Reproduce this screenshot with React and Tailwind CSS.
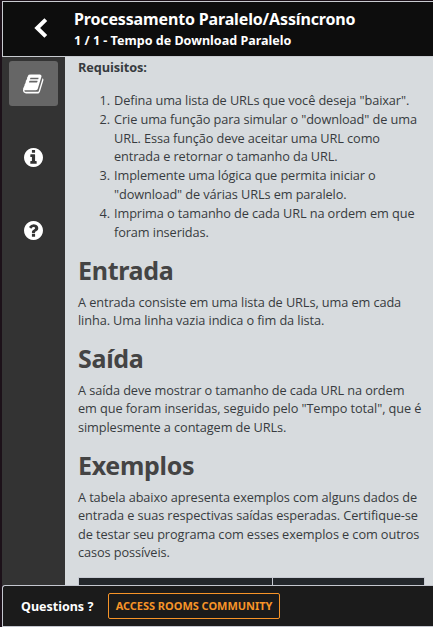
import React from "react";

const BOOK =
  "M1639 478q40 57 18 129l-275 906q-19 64-76.5 107.5t-122.5 43.5h-923q-77 0-148.5-53.5t-99.5-131.5q-24-67-2-127 0-4 3-27t4-37q1-8-3-21.5t-3-19.5q2-11 8-21t16.5-23.5 16.5-23.5q23-38 45-91.5t30-91.5q3-10 .5-30t-.5-28q3-11 17-28t17-23q21-36 42-92t25-90q1-9-2.5-32t.5-28q4-13 22-30.5t22-22.5q19-26 42.5-84.5t27.5-96.5q1-8-3-25.5t-2-26.5q2-8 9-18t18-23 17-21q8-12 16.5-30.5t15-35 16-36 19.5-32 26.5-23.5 36-11.5 47.5 5.5l-1 3q38-9 51-9h761q74 0 114 56t18 130l-274 906q-36 119-71.5 153.5t-128.5 34.5h-869q-27 0-38 15-11 16-1 43 24 70 144 70h923q29 0 56-15.5t35-41.5l300-987q7-22 5-57 38 15 59 43zm-1064 2q-4 13 2 22.5t20 9.5h608q13 0 25.5-9.5t16.5-22.5l21-64q4-13-2-22.5t-20-9.5h-608q-13 0-25.5 9.5t-16.5 22.5zm-83 256q-4 13 2 22.5t20 9.5h608q13 0 25.5-9.5t16.5-22.5l21-64q4-13-2-22.5t-20-9.5h-608q-13 0-25.5 9.5t-16.5 22.5z";

const INFO =
  "M1152 1376v-160q0-14-9-23t-23-9h-96v-512q0-14-9-23t-23-9h-320q-14 0-23 9t-9 23v160q0 14 9 23t23 9h96v320h-96q-14 0-23 9t-9 23v160q0 14 9 23t23 9h448q14 0 23-9t9-23zm-128-896v-160q0-14-9-23t-23-9h-192q-14 0-23 9t-9 23v160q0 14 9 23t23 9h192q14 0 23-9t9-23zm640 416q0 209-103 385.5t-279.5 279.5-385.5 103-385.5-103-279.5-279.5-103-385.5 103-385.5 279.5-279.5 385.5-103 385.5 103 279.5 279.5 103 385.5z";

const QUESTION =
  "M1024 1376v-192q0-14-9-23t-23-9h-192q-14 0-23 9t-9 23v192q0 14 9 23t23 9h192q14 0 23-9t9-23zm256-672q0-88-55.5-163t-138.5-116-170-41q-243 0-371 213-15 24 8 42l132 100q7 6 19 6 16 0 25-12 53-68 86-92 34-24 86-24 48 0 85.5 26t37.5 59q0 38-20 61t-68 45q-63 28-115.5 86.5t-52.5 125.5v36q0 14 9 23t23 9h192q14 0 23-9t9-23q0-19 21.5-49.5t54.5-49.5q32-18 49-28.5t46-35 44.5-48 28-60.5 12.5-81zm384 192q0 209-103 385.5t-279.5 279.5-385.5 103-385.5-103-279.5-279.5-103-385.5 103-385.5 279.5-279.5 385.5-103 385.5 103 279.5 279.5 103 385.5z";

function Lines({ lines }) {
  return lines.map((line) => (
    <span key={line} className="block whitespace-nowrap">
      {line}
    </span>
  ));
}

function Section({ title, lines }) {
  return (
    <section>
      <h1 className="mb-[8.7px] font-['Noto_Sans',sans-serif] text-[25px] leading-[28px] font-bold tracking-[-0.3px] text-[#444444]">
        {title}
      </h1>
      <p className="mb-[14.3px]">
        <Lines lines={lines} />
      </p>
    </section>
  );
}

const REQUIREMENTS = [
  ['Defina uma lista de URLs que você deseja "baixar".'],
  [
    'Crie uma função para simular o "download" de uma',
    "URL. Essa função deve aceitar uma URL como",
    "entrada e retornar o tamanho da URL.",
  ],
  ["Implemente uma lógica que permita iniciar o", '"download" de várias URLs em paralelo.'],
  ["Imprima o tamanho de cada URL na ordem em que", "foram inseridas."],
];

export default function App() {
  return (
    <div className="flex h-[627px] w-[433px] flex-col overflow-hidden bg-[#1c1119] pt-px pl-[2px] font-['Noto_Sans',sans-serif]">
      <header className="flex h-[56px] shrink-0 border-t border-b border-l border-[#c8cbd0] bg-[#0d0d0d] text-white">
        <div className="w-[71px] pt-[16px] pl-[31px]">
          <svg width="14" height="20" viewBox="0 0 14 20" fill="none" stroke="currentColor" strokeWidth="4">
            <path d="M11.8 1.6 3.2 10l8.6 8.4" />
          </svg>
        </div>
        <div className="pt-[6px] font-bold whitespace-nowrap">
          <div className="text-[16px] leading-[22px] tracking-[-0.15px]">Processamento Paralelo/Assíncrono</div>
          <div className="mt-[2px] text-[12.55px] leading-[18px]">1 / 1 - Tempo de Download Paralelo</div>
        </div>
      </header>

      <div className="flex h-[528px] shrink-0 overflow-hidden">
        <nav className="flex w-[63px] shrink-0 flex-col items-center bg-[#333333] pt-[4px] text-white">
          <button className="flex h-[45px] w-[49px] items-center justify-center rounded-[3px] bg-[#666666]">
            <svg width="22" height="22" viewBox="0 0 1792 1792" fill="currentColor">
              <path d={BOOK} />
            </svg>
          </button>
          <svg className="mt-[42px] size-[19px] shrink-0" viewBox="128 128 1536 1536" fill="currentColor">
            <path d={INFO} />
          </svg>
          <svg className="mt-[54px] size-[19px] shrink-0" viewBox="128 128 1536 1536" fill="currentColor">
            <path d={QUESTION} />
          </svg>
        </nav>

        <main className="flex-1 bg-[#d7dbde] pl-[13px] font-['Open_Sans','Noto_Sans',sans-serif] text-[12.75px] leading-[18.57px] tracking-[-0.1px] text-[#373b40]">
          <p className="pt-px font-bold">Requisitos:</p>
          <ol className="mt-[14.5px] mb-[14.6px] leading-[18.8px]">
            {REQUIREMENTS.map((lines, i) => (
              <li key={i} className="flex gap-[4px]">
                <span className="w-[32px] text-right">{i + 1}.</span>
                <div>
                  <Lines lines={lines} />
                </div>
              </li>
            ))}
          </ol>
          <Section
            title="Entrada"
            lines={["A entrada consiste em uma lista de URLs, uma em cada", "linha. Uma linha vazia indica o fim da lista."]}
          />
          <Section
            title="Saída"
            lines={[
              "A saída deve mostrar o tamanho de cada URL na ordem",
              'em que foram inseridas, seguido pelo "Tempo total", que é',
              "simplesmente a contagem de URLs.",
            ]}
          />
          <Section
            title="Exemplos"
            lines={[
              "A tabela abaixo apresenta exemplos com alguns dados de",
              "entrada e suas respectivas saídas esperadas. Certifique-se",
              "de testar seu programa com esses exemplos e com outros",
              "casos possíveis.",
            ]}
          />
          <div className="mt-[15px] flex h-[20px] w-[347px] border border-[#c8cbd3] bg-[#23272b]">
            <div className="w-[194px] border-r border-[#c8cbd3]" />
          </div>
        </main>
      </div>

      <footer className="flex h-[42px] shrink-0 items-center rounded-tl-[3px] border-t border-b border-l border-[#c4c7cf] bg-[#1b1b1b] pl-[18px]">
        <span className="w-[87px] pt-[2px] text-[12.5px] font-bold whitespace-nowrap text-white">Questions ?</span>
        <button className="flex h-[26px] w-[172px] items-center justify-center rounded-[2px] border border-[#f79428] text-[11px] font-bold tracking-[-0.03px] whitespace-nowrap text-[#f79428]">
          ACCESS ROOMS COMMUNITY
        </button>
      </footer>
    </div>
  );
}
